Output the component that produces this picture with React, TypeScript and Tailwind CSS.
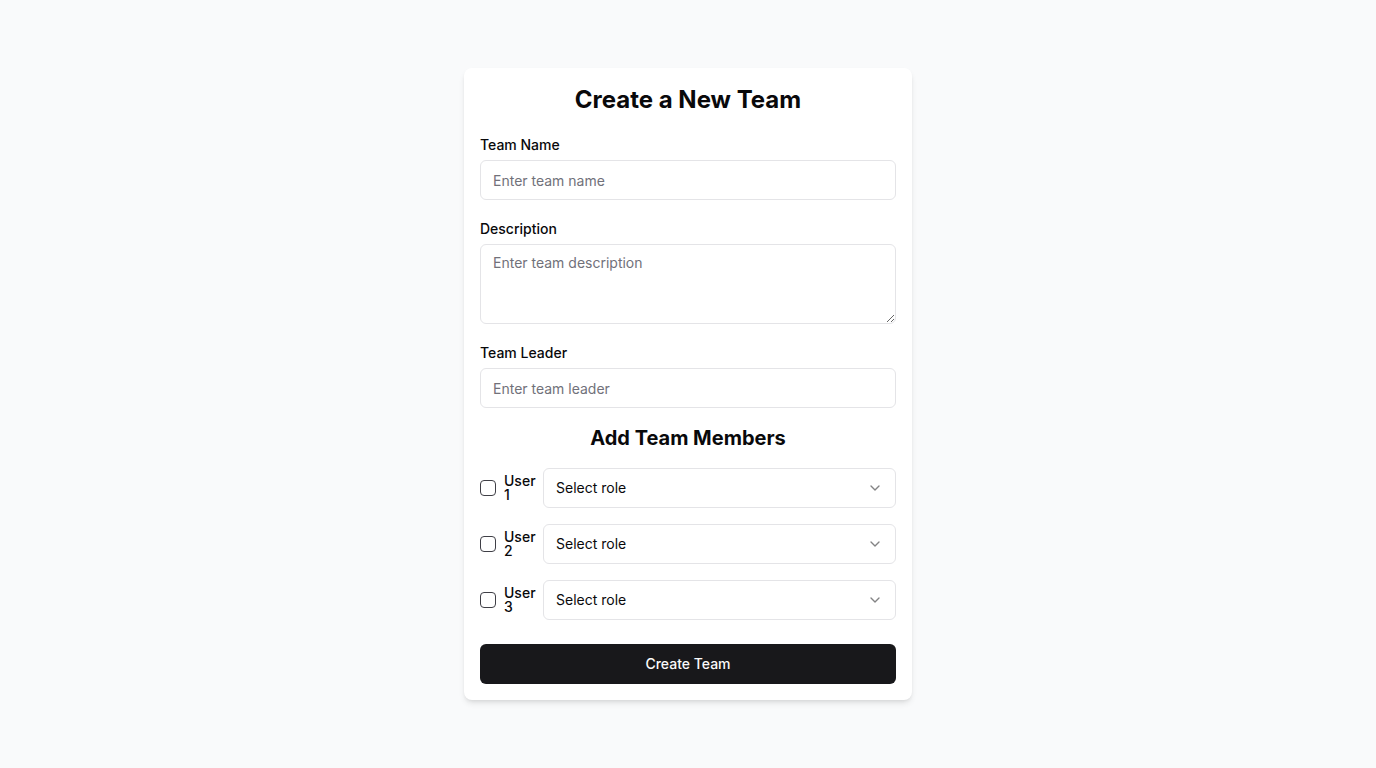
import React from "react";

function Chevron() {
  return (
    <svg width="16" height="16" viewBox="0 0 24 24" fill="none" stroke="currentColor" strokeWidth="2" strokeLinecap="round" strokeLinejoin="round" className="opacity-50">
      <path d="m6 9 6 6 6-6" />
    </svg>
  );
}

export default function App() {
  const users = ["User 1", "User 2", "User 3"];
  return (
    <div className="min-h-screen bg-gray-50 flex justify-center pt-[68px] text-[#09090b]" style={{ fontFamily: "Inter, 'Noto Sans', sans-serif" }}>
      <div className="w-[448px] h-fit bg-white rounded-lg shadow-md p-4">
        <h1 className="text-2xl font-bold text-center mb-4">Create a New Team</h1>
        <div className="space-y-4">
          <div>
            <div>
              <label className="text-sm font-medium leading-none">Team Name</label>
            </div>
            <input
              placeholder="Enter team name"
              className="mt-1 flex h-10 w-full rounded-md border border-[#e4e4e7] bg-white px-3 py-2 text-sm placeholder:text-[#71717a] outline-none"
            />
          </div>
          <div>
            <div>
              <label className="text-sm font-medium leading-none">Description</label>
            </div>
            <textarea
              placeholder="Enter team description"
              className="mt-1 block h-20 w-full rounded-md border border-[#e4e4e7] bg-white px-3 py-2 text-sm placeholder:text-[#71717a] outline-none"
            />
          </div>
          <div>
            <div>
              <label className="text-sm font-medium leading-none">Team Leader</label>
            </div>
            <input
              placeholder="Enter team leader"
              className="mt-1 flex h-10 w-full rounded-md border border-[#e4e4e7] bg-white px-3 py-2 text-sm placeholder:text-[#71717a] outline-none"
            />
          </div>
          <h2 className="text-xl font-bold text-center leading-7">Add Team Members</h2>
          <div className="space-y-4">
            {users.map((u) => (
              <div key={u} className="flex items-center gap-2">
                <input type="checkbox" className="appearance-none h-4 w-4 shrink-0 m-0 rounded-[4px] border-[1.5px] border-[#3f3f46] bg-white" />
                <label className="w-[31px] shrink-0 text-sm font-medium leading-none">{u}</label>
                <button className="flex h-10 min-w-0 flex-1 items-center justify-between rounded-md border border-[#e4e4e7] bg-white px-3 py-2 text-sm">
                  <span>Select role</span>
                  <Chevron />
                </button>
              </div>
            ))}
          </div>
          <div className="pt-2">
            <button className="h-10 w-full rounded-md bg-[#18181b] text-[#fafafa] text-sm font-medium">Create Team</button>
          </div>
        </div>
      </div>
    </div>
  );
}
